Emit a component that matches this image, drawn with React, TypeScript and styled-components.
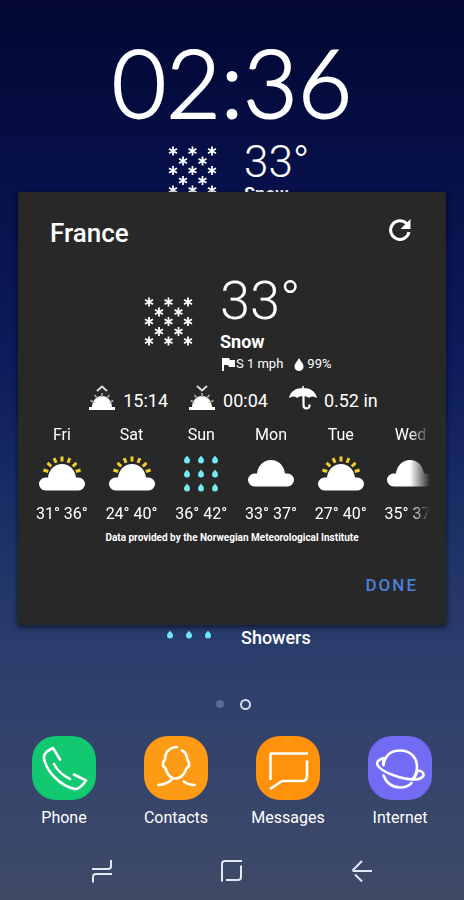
import React from "react";
import styled, { createGlobalStyle } from "styled-components";

const GlobalStyle = createGlobalStyle`
  *, *::before, *::after { box-sizing: border-box; }
  body { margin: 0; background: #3d4866; }
  button { border: 0; padding: 0; background: none; color: inherit; font: inherit; cursor: pointer; }
  svg { display: block; flex: none; }
`;

const Screen = styled.div`
  position: relative;
  display: flex;
  flex-direction: column;
  min-height: 100vh;
  overflow: hidden;
  color: #fff;
  font-family: Roboto, "Liberation Sans", sans-serif;
  background: linear-gradient(180deg, #020832 0%, #07104a 20%, #0c1c5c 40%, #1c3068 58%, #2a3d6c 72%, #35446b 86%, #3f4a66 100%);
`;

const Home = styled.main`
  flex: 1;
  display: flex;
  flex-direction: column;
`;

const Clock = styled.time`
  display: block;
  padding-top: 32px;
  text-align: center;
  font-family: Lato, "Liberation Sans", sans-serif;
  font-weight: 300;
  font-size: 94px;
  line-height: 100px;
  -webkit-text-stroke: 2px #fff;
`;

const Widget = styled.section<{ $gap: number; $indent: number }>`
  display: flex;
  justify-content: center;
  gap: ${(p) => p.$gap}px;
  padding-left: ${(p) => p.$indent}px;
`;

const WidgetIcon = styled.div<{ $top?: number; $bottom?: number }>`
  padding-top: ${(p) => p.$top ?? 0}px;
  padding-bottom: ${(p) => p.$bottom ?? 0}px;
`;

const WidgetText = styled.div<{ $top?: number }>`
  display: flex;
  flex-direction: column;
  justify-content: flex-end;
  width: 72px;
  padding-top: ${(p) => p.$top ?? 0}px;
`;

const Temperature = styled.div<{ $size: number; $line: number }>`
  font-size: ${(p) => p.$size}px;
  line-height: ${(p) => p.$line}px;
  font-weight: 300;
`;

const Condition = styled.div`
  font-size: 18px;
  line-height: 20px;
  font-weight: 700;
`;

const Place = styled.div`
  font-size: 18px;
  line-height: 20px;
  font-weight: 500;
`;

const Spacer = styled.div`
  flex: 1;
`;

const Pages = styled.div`
  display: flex;
  justify-content: center;
  align-items: center;
  gap: 16px;
  height: 12px;
  margin: 50px 0 26px;
  padding-left: 2px;
`;

const PageDot = styled.button<{ $current?: boolean }>`
  && {
    width: ${(p) => (p.$current ? 11 : 8)}px;
    height: ${(p) => (p.$current ? 11 : 8)}px;
    border-radius: 50%;
    border: ${(p) => (p.$current ? "2px solid #d5daea" : "0")};
    background: ${(p) => (p.$current ? "transparent" : "#5d6a92")};
  }
`;

const Dock = styled.nav`
  display: grid;
  grid-template-columns: repeat(4, 1fr);
  padding: 0 8px;
`;

const AppLink = styled.button`
  display: flex;
  flex-direction: column;
  align-items: center;
  gap: 8px;
  && {
    font-size: 16px;
    line-height: 20px;
  }
`;

const AppTile = styled.span<{ $color: string }>`
  display: block;
  width: 64px;
  height: 64px;
  border-radius: 24px;
  background: ${(p) => p.$color};
`;

const NavBar = styled.nav`
  display: flex;
  justify-content: space-between;
  align-items: center;
  height: 58px;
  margin-top: 14px;
  padding: 0 90px;
`;

const Overlay = styled.div`
  position: absolute;
  inset: 0;
  display: flex;
  align-items: center;
  padding: 0 18px 83px;
`;

const Dialog = styled.section`
  flex: 1;
  min-width: 0;
  padding: 24px 0 28px;
  border-radius: 2px;
  background: #282828;
  box-shadow: 0 2px 5px 1px rgba(0, 0, 0, 0.5);
`;

const DialogHeader = styled.header`
  display: flex;
  justify-content: space-between;
  height: 34px;
  padding: 0 34px 0 32px;
`;

const Title = styled.h1`
  margin: 0;
  font-size: 26px;
  line-height: 34px;
  font-weight: 500;
`;

const RefreshButton = styled.button`
  align-self: flex-start;
  && {
    padding: 2px 0;
  }
`;

const Current = styled.div`
  display: flex;
  justify-content: center;
  gap: 26px;
  margin-top: 20px;
  padding-left: 24px;
`;

const CurrentIcon = styled.div`
  padding-top: 27px;
`;

const CurrentText = styled.div`
  width: 124px;
`;

const Details = styled.div`
  display: flex;
  gap: 11px;
  margin-top: 4px;
  padding-left: 2px;
  font-size: 13px;
  line-height: 16px;
  white-space: nowrap;
`;

const Detail = styled.span<{ $gap: number }>`
  display: flex;
  align-items: center;
  gap: ${(p) => p.$gap}px;
`;

const SunTimes = styled.div`
  display: flex;
  justify-content: center;
  gap: 20px;
  margin-top: 13px;
  padding-left: 2px;
  font-size: 18px;
  line-height: 28px;
  white-space: nowrap;

  svg {
    margin-bottom: 6px;
  }
`;

const Forecast = styled.ul`
  display: flex;
  list-style: none;
  overflow: hidden;
  margin: 8px 16px 0 9px;
  padding: 0;
  mask-image: linear-gradient(90deg, #000 0, #000 calc(100% - 20px), transparent 100%);
`;

const Day = styled.li`
  flex: 0 0 17.3%;
  display: flex;
  flex-direction: column;
  align-items: center;
  font-size: 16px;
  line-height: 20px;
  white-space: nowrap;
`;

const DayIcon = styled.div`
  margin: 10px 0 11px;
`;

const Credit = styled.p`
  margin: 7px 0 0;
  text-align: center;
  font-size: 10px;
  line-height: 14px;
  font-weight: 700;
`;

const Actions = styled.footer`
  display: flex;
  justify-content: flex-end;
  margin-top: 28px;
  padding: 0 28px;
`;

const DoneButton = styled.button`
  && {
    color: #4a80dc;
    font-size: 17px;
    line-height: 24px;
    font-weight: 500;
    letter-spacing: 2px;
  }
`;

const FLAKES = [
  [5, 5], [24.5, 5], [44, 5],
  [15, 15], [34.5, 15],
  [5, 24.5], [24.5, 24.5], [44, 24.5],
  [15, 34.5], [34.5, 34.5],
  [5, 44], [24.5, 44], [44, 44],
];

const SnowIcon = () => (
  <svg width="50" height="50" viewBox="0 0 50 50" stroke="#fff" strokeWidth="1.8" aria-hidden="true">
    {FLAKES.map(([x, y]) => (
      <path key={`${x}-${y}`} d={`M${x} ${y - 4.6}v9.2M${x - 4} ${y - 2.3}l8 4.6M${x - 4} ${y + 2.3}l8 -4.6`} />
    ))}
  </svg>
);

const drop = (x: number, y: number) =>
  `M${x} ${y - 4.4}c1 1.7 3 3 3 4.8a3 3 0 0 1-6 0c0-1.800 2-3.100 3-4.800z`;

const RainIcon = ({ step }: { step: number }) => {
  const at = [5, 5 + step, 5 + 2 * step];
  const size = 10 + 2 * step;
  return (
    <svg width={size} height={size} viewBox={`0 0 ${size} ${size}`} fill="#6feaf6" aria-hidden="true">
      {at.map((y) => at.map((x) => <path key={`${x}-${y}`} d={drop(x, y)} />))}
    </svg>
  );
};

const CloudIcon = ({ sun }: { sun?: boolean }) => (
  <svg width="48" height="38" viewBox="0 0 48 38" aria-hidden="true">
    {sun && (
      <g stroke="#f2cd2c" strokeWidth="3">
        {[-72, -48, -24, 0, 24, 48, 72].map((a) => (
          <path key={a} d="M24 1.500v5" transform={`rotate(${a} 24 21)`} />
        ))}
      </g>
    )}
    <path
      fill="#fff"
      d="M10 22.500C11 14.500 16.500 9 24 9S37 14.500 38 22.500H40.500A6.500 6.500 0 0 1 40.500 35.500H7.500A6.500 6.500 0 0 1 7.500 22.500z"
      transform={sun ? undefined : "translate(0 -4)"}
    />
  </svg>
);

const HorizonIcon = ({ down }: { down?: boolean }) => (
  <svg width="28" height="26" viewBox="0 0 28 26" fill="#fff" aria-hidden="true">
    <path d={down ? "M9 1l5 4.500L19 1" : "M9 6l5-4.500L19 6"} fill="none" stroke="#ddd" strokeWidth="2" />
    <path d="M4 22C4.500 15 8.500 11 14 11s9.500 4 10 11h3v3H1v-3z" />
    <path d="M14 8v4M6.500 10l3 3.500M21.500 10l-3 3.500M2.500 15.500l4 2M25.500 15.500l-4 2" stroke="#aaa" strokeWidth="1.600" />
  </svg>
);

const UmbrellaIcon = () => (
  <svg width="30" height="26" viewBox="0 0 30 26" fill="#fff" aria-hidden="true">
    <path d="M1 13C2.500 6 8 3 15 3s12.500 3 14 10c-3-2-6-2-8 0-2-1.500-4-2-6-1.500-2-.5-4 0-6 1.500-2-2-5-2-8 0z" />
    <path d="M15 1v2.500" stroke="#fff" strokeWidth="1.500" />
    <path d="M15.500 11v9c0 4.500 6 4.500 6 .5v-1" fill="none" stroke="#fff" strokeWidth="2.200" />
  </svg>
);

const FlagIcon = () => (
  <svg width="13" height="13" viewBox="0 0 13 13" fill="#fff" aria-hidden="true">
    <path d="M0 0h7l1 2h5v7H7L6 7H2v6H0z" />
  </svg>
);

const HumidityIcon = () => (
  <svg width="10" height="13" viewBox="0 0 10 13" fill="#fff" aria-hidden="true">
    <path d="M5 0c1.500 3 4.500 5.500 4.500 8.500a4.500 4.500 0 0 1-9 0C.5 5.500 3.500 3 5 0z" />
  </svg>
);

const RefreshIcon = () => (
  <svg width="24" height="24" viewBox="0 0 24 24" aria-hidden="true">
    <path d="M21 14A9.300 9.300 0 1 1 18.500 5.500" fill="none" stroke="#fff" strokeWidth="3" />
    <path d="M22.500 1v10h-10z" fill="#fff" />
  </svg>
);

const line = {
  width: 64,
  height: 64,
  viewBox: "0 0 64 64",
  fill: "none",
  stroke: "#fff",
  strokeWidth: 2.6,
  strokeLinecap: "round" as const,
  strokeLinejoin: "round" as const,
  "aria-hidden": true,
};

const PhoneGlyph = () => (
  <svg {...line}>
    <path d="M28 23.500L21 12C16 14.500 11.500 17 12 22C14 35 28 50 43 53C48 53 51 49 54 44.500L42 38.500" />
    <path d="M22 28C25 34 31 39.500 38 43" />
  </svg>
);

const ContactsGlyph = () => (
  <svg {...line}>
    <path d="M33 11C26 11 21 16 21 23.500C18 26.500 18.500 31 21.500 32C22.500 37 25 40 28.500 42.500C26 46 21 48.500 14.500 49" />
    <path d="M38 14.500C41.500 16 43 19 43.500 24C46 27 45.500 31 42.500 32C41.500 37 37 42.500 32 42.500C30.500 42.500 29.500 42.500 28.500 42M40 45.500C43 48 46 49 50.500 49" />
  </svg>
);

const MessagesGlyph = () => (
  <svg {...line} strokeLinecap="butt">
    <path d="M14.500 44V18.500Q14.500 17.500 15.500 17.500H52M51 24.500V40Q51 45 46 45H26L14 53" />
  </svg>
);

const InternetGlyph = () => (
  <svg {...line}>
    <path d="M15.500 29C17 19.500 23 14.500 32 14.500C42 14.500 49 21 49 31C49 35.500 48 39 45 42.500" />
    <path d="M16 22C11 23 8 26 9.500 29C13 36 34 44 48 43.500C54 43 58 39 54 36C53 35 51.500 34.500 50 34.500" />
    <path d="M16 22.500C14.500 24.500 15 26.500 15.500 29M49.500 35L46.500 42" />
    <path d="M15.500 39.500C19 48 25 51.500 32 51.500C37 51.500 41 50 43.500 47" />
  </svg>
);

const navLine = {
  width: 24,
  height: 24,
  viewBox: "0 0 24 24",
  fill: "none",
  stroke: "#e3e8f6",
  strokeWidth: 2,
  "aria-hidden": true,
};

const RecentsGlyph = () => (
  <svg {...navLine}>
    <path d="M2 10H18Q21 10 21 7V1M22 15H6Q3 15 3 18V23.500" />
  </svg>
);

const HomeGlyph = () => (
  <svg {...navLine}>
    <path d="M2 22.500V5Q2 2 5 2H22M21 6.500V18Q21 21 18 21H6" />
  </svg>
);

const BackGlyph = () => (
  <svg {...navLine}>
    <path d="M12 2L2.500 11.500M22 12H2.500M5 15.500L12 22.500" />
  </svg>
);

const DAYS = [
  { name: "Fri", icon: <CloudIcon sun />, range: "31° 36°" },
  { name: "Sat", icon: <CloudIcon sun />, range: "24° 40°" },
  { name: "Sun", icon: <RainIcon step={14} />, range: "36° 42°" },
  { name: "Mon", icon: <CloudIcon />, range: "33° 37°" },
  { name: "Tue", icon: <CloudIcon sun />, range: "27° 40°" },
  { name: "Wed", icon: <CloudIcon />, range: "35° 37°" },
];

const APPS = [
  { name: "Phone", color: "#12c972", glyph: <PhoneGlyph /> },
  { name: "Contacts", color: "#fd9c14", glyph: <ContactsGlyph /> },
  { name: "Messages", color: "#ff910b", glyph: <MessagesGlyph /> },
  { name: "Internet", color: "#716cf3", glyph: <InternetGlyph /> },
];

export default function App() {
  return (
    <Screen>
      <GlobalStyle />
      <Home>
        <Clock>02:36</Clock>
        <Widget $gap={26} $indent={20}>
          <WidgetIcon $top={14}>
            <SnowIcon />
          </WidgetIcon>
          <WidgetText $top={8}>
            <Temperature $size={44} $line={44}>33°</Temperature>
            <Condition>Snow</Condition>
          </WidgetText>
        </Widget>
        <Spacer />
        <Widget $gap={28} $indent={14}>
          <WidgetIcon $bottom={8}>
            <RainIcon step={19} />
          </WidgetIcon>
          <WidgetText>
            <Place>Showers</Place>
          </WidgetText>
        </Widget>
        <Pages>
          <PageDot aria-label="Page 1" />
          <PageDot $current aria-label="Page 2" />
        </Pages>
      </Home>
      <Dock>
        {APPS.map((app) => (
          <AppLink key={app.name}>
            <AppTile $color={app.color}>{app.glyph}</AppTile>
            {app.name}
          </AppLink>
        ))}
      </Dock>
      <NavBar>
        <button aria-label="Recent apps"><RecentsGlyph /></button>
        <button aria-label="Home"><HomeGlyph /></button>
        <button aria-label="Back"><BackGlyph /></button>
      </NavBar>
      <Overlay>
        <Dialog role="dialog" aria-labelledby="place">
          <DialogHeader>
            <Title id="place">France</Title>
            <RefreshButton aria-label="Refresh"><RefreshIcon /></RefreshButton>
          </DialogHeader>
          <Current>
            <CurrentIcon><SnowIcon /></CurrentIcon>
            <CurrentText>
              <Temperature $size={54} $line={62}>33°</Temperature>
              <Condition>Snow</Condition>
              <Details>
                <Detail $gap={1}><FlagIcon />S 1 mph</Detail>
                <Detail $gap={3}><HumidityIcon />99%</Detail>
              </Details>
            </CurrentText>
          </Current>
          <SunTimes>
            <Detail $gap={7}><HorizonIcon />15:14</Detail>
            <Detail $gap={7}><HorizonIcon down />00:04</Detail>
            <Detail $gap={6}><UmbrellaIcon />0.52 in</Detail>
          </SunTimes>
          <Forecast>
            {DAYS.map((day) => (
              <Day key={day.name}>
                {day.name}
                <DayIcon>{day.icon}</DayIcon>
                {day.range}
              </Day>
            ))}
          </Forecast>
          <Credit>Data provided by the Norwegian Meteorological Institute</Credit>
          <Actions>
            <DoneButton>DONE</DoneButton>
          </Actions>
        </Dialog>
      </Overlay>
    </Screen>
  );
}
